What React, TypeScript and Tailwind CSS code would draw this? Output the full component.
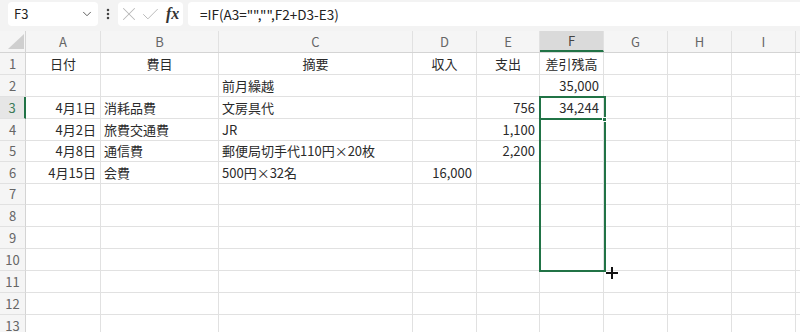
import { ChevronDown, EllipsisVertical, X, Check } from "lucide-react";

type Cell = { t: string; a?: "l" | "r" | "c" };

const cols = [
  { key: "A", w: "w-[75px]" },
  { key: "B", w: "w-[118px]" },
  { key: "C", w: "w-[194px]" },
  { key: "D", w: "w-[64px]" },
  { key: "E", w: "w-[63px]" },
  { key: "F", w: "w-[64px]" },
  { key: "G", w: "w-[64px]" },
  { key: "H", w: "w-[64px]" },
  { key: "I", w: "w-[64px]" },
  { key: "J", w: "w-[64px]" },
];

// row heights in px, spelled out so tailwind picks them up
const rowH = [
  "h-[22px]",
  "h-[22px]",
  "h-[22px]",
  "h-[22px]",
  "h-[21px]",
  "h-[22px]",
  "h-[21px]",
  "h-[22px]",
  "h-[22px]",
  "h-[22px]",
  "h-[22px]",
  "h-[22px]",
  "h-[22px]",
];

const data: Record<number, (Cell | null)[]> = {
  1: [{ t: "日付", a: "c" }, { t: "費目", a: "c" }, { t: "摘要", a: "c" }, { t: "収入", a: "c" }, { t: "支出", a: "c" }, { t: "差引残高", a: "c" }],
  2: [null, null, { t: "前月繰越" }, null, null, { t: "35,000", a: "r" }],
  3: [{ t: "4月1日", a: "r" }, { t: "消耗品費" }, { t: "文房具代" }, null, { t: "756", a: "r" }, { t: "34,244", a: "r" }],
  4: [{ t: "4月2日", a: "r" }, { t: "旅費交通費" }, { t: "JR" }, null, { t: "1,100", a: "r" }],
  5: [{ t: "4月8日", a: "r" }, { t: "通信費" }, { t: "郵便局切手代110円×20枚" }, null, { t: "2,200", a: "r" }],
  6: [{ t: "4月15日", a: "r" }, { t: "会費" }, { t: "500円×32名" }, { t: "16,000", a: "r" }],
};

function TopBar() {
  return (
    <div className="h-[31px] bg-[#f3f3f3] flex items-start pt-[2px] text-[13px] text-[#222]">
      <div className="ml-[8px] w-[90px] h-[24px] bg-white rounded-[4px] flex items-center justify-between pl-[6px] pr-[4px]">
        <span>F3</span>
        <ChevronDown size={14} strokeWidth={1.6} className="text-[#555]" />
      </div>
      <div className="w-[20px] h-[24px] flex items-center justify-center">
        <EllipsisVertical size={14} strokeWidth={2.4} className="text-[#444]" />
      </div>
      <div className="w-[65px] h-[24px] bg-white rounded-[4px] flex items-center pl-[0px]">
        <X size={22} strokeWidth={1.1} className="text-[#b8b8b8]" />
        <Check size={21} strokeWidth={1.1} className="text-[#b8b8b8]" />
        <span className="ml-[5px] font-['Liberation_Serif',serif] italic font-bold text-[16px] text-[#333] leading-none">
          fx
        </span>
      </div>
      <div className="ml-[5px] flex-1 h-[24px] bg-white rounded-l-[4px] flex items-center pl-[12px] text-[13.5px]">
        =IF(A3="","",F2+D3-E3)
      </div>
    </div>
  );
}

function HeaderRow() {
  return (
    <div className="flex h-[22px] bg-[#f5f5f5] border-b border-[#d4d4d4]">
      <div className="w-[26px] shrink-0 relative border-r border-[#d4d4d4]">
        <svg width="18" height="16" viewBox="0 0 18 16" className="absolute left-[7px] top-[3px]">
          <polygon points="17,0 17,15 1,15" fill="#cfcfcf" />
        </svg>
      </div>
      {cols.map((c) => (
        <div
          key={c.key}
          className={`${c.w} shrink-0 flex items-center justify-center border-r border-[#e1e1e1] ${
            c.key === "F" ? "bg-[#dadada] text-[#444] border-b-2 border-b-[#217346]" : "text-[#666]"
          }`}
        >
          {c.key === "J" ? "" : c.key}
        </div>
      ))}
    </div>
  );
}

function Row({ n }: { n: number }) {
  const cells = data[n] ?? [];
  const active = n === 3;
  return (
    <div className={`flex ${rowH[n - 1]}`}>
      <div
        className={`w-[26px] shrink-0 flex items-center justify-center border-b border-[#e1e1e1] ${
          active
            ? "bg-[#e6e6e6] text-[#3b7a57] border-r-2 border-r-[#217346]"
            : "bg-[#f5f5f5] text-[#666] border-r border-r-[#d4d4d4]"
        }`}
      >
        {n}
      </div>
      {cols.map((c, i) => {
        const cell = cells[i];
        const align =
          cell?.a === "r" ? "justify-end pr-[4px]" : cell?.a === "c" ? "justify-center" : "justify-start pl-[3px]";
        return (
          <div
            key={c.key}
            className={`${c.w} shrink-0 flex items-center whitespace-nowrap overflow-visible border-r border-b border-[#e1e1e1] text-[#2a2a2a] ${align}`}
          >
            {cell?.t}
          </div>
        );
      })}
    </div>
  );
}

export default function App() {
  const rows = Array.from({ length: 13 }, (_, i) => i + 1);
  return (
    <div className="w-[800px] h-[332px] overflow-hidden bg-white font-['Noto_Sans_CJK_JP',sans-serif] text-[13px]">
      <TopBar />
      <div className="relative">
        <HeaderRow />
        {rows.map((n) => (
          <Row key={n} n={n} />
        ))}

        {/* range outline F3:F10 */}
        <div className="absolute left-[539px] top-[65px] w-[67px] h-[176px] border-2 border-[#217346] pointer-events-none" />
        {/* active cell F3 */}
        <div className="absolute left-[539px] top-[65px] w-[67px] h-[24px] border-2 border-[#217346] pointer-events-none" />
        {/* fill handle */}
        <div className="absolute left-[602px] top-[86px] w-[5px] h-[5px] bg-[#217346] border border-white" />
        {/* mouse cursor */}
        <svg width="14" height="14" viewBox="0 0 14 14" className="absolute left-[605px] top-[235px]">
          <path d="M7 1v12M1 7h12" stroke="#111" strokeWidth="2" />
        </svg>
      </div>
    </div>
  );
}
